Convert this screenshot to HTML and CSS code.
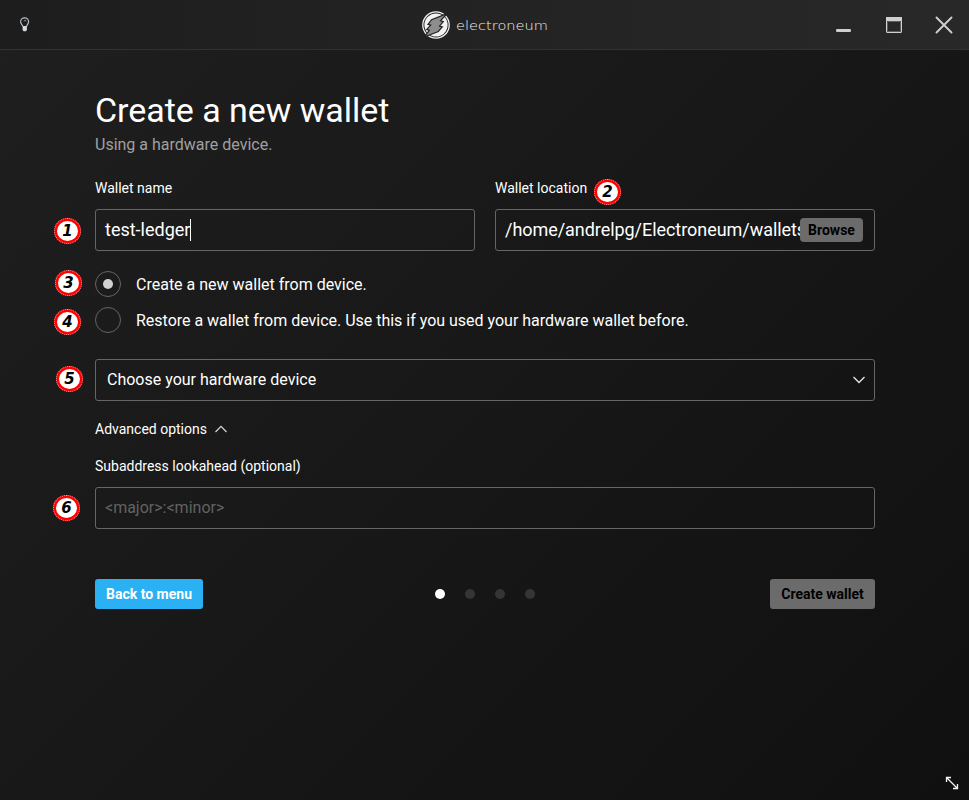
FILE: index.html
```html
<!DOCTYPE html>
<html lang="en">
<head>
<meta charset="utf-8">
<title>Electroneum</title>
<link rel="stylesheet" href="styles.css">
</head>
<body>
<header class="titlebar">
  <svg class="bulb" width="12" height="16" viewBox="0 0 12 16"><path d="M3.800 9.500C3.400 7.500 1.600 7 1.600 4.800a4 3.900 0 0 1 8 0C9.600 7 7.800 7.500 7.600 9.500" fill="none" stroke="#b9bdc0" stroke-width="1.200"/><path d="M4.800 4.200q1-1.400 2.600-.2" fill="none" stroke="#999"/><path d="M3.600 9h4.300v4l-1 1.200H4.600l-1-1.200z" fill="#d5dade"/></svg>
  <div class="brand">
    <svg width="30" height="30" viewBox="0 0 30 30"><circle cx="15" cy="15" r="13.200" fill="#222" stroke="#f2f2f2" stroke-width="1.300"/><circle cx="15" cy="15" r="11.600" fill="#f2f2f2"/><path d="M26 3.600 10.500 9.700 7 14.300l2.700.8-4 4.300 2.700 1L3.500 27l13.800-5.500 4-4.700-2.800-.7 3.800-4.500-2.800-.8z" fill="#8e8e8e" stroke="#222" stroke-width="1.200"/></svg>
    <svg class="wordmark" width="96" height="20" viewBox="0 0 96 20"><text x="1" y="15" textLength="92" lengthAdjust="spacingAndGlyphs">electroneum</text></svg>
  </div>
  <div class="controls">
    <svg width="50" height="50" viewBox="0 0 50 50"><rect x="17" y="29" width="15" height="3" rx="1.200" fill="#cfcfcf"/></svg>
    <svg width="50" height="50" viewBox="0 0 50 50"><rect x="17.500" y="17.500" width="15" height="15" rx=".5" fill="none" stroke="#cfcfcf"/><path d="M17 17h16v4H17z" fill="#cfcfcf"/><path d="M18.500 21.500h13v10h-13z" fill="none" stroke="#5d5d5d"/></svg>
    <svg width="50" height="50" viewBox="0 0 50 50"><path d="m17.500 17.500 15 15m0-15-15 15" fill="none" stroke="#cfcfcf" stroke-width="1.900" stroke-linecap="round"/></svg>
  </div>
</header>

<main class="wizard">
  <h1>Create a new wallet</h1>
  <p class="subtitle">Using a hardware device.</p>
  <div class="fields">
    <div class="field">
      <div class="label">Wallet name</div>
      <div class="input"><span>test-ledger</span><i class="caret"></i></div>
    </div>
    <div class="field">
      <div class="label">Wallet location</div>
      <div class="input location"><span class="path">/home/andrelpg/Electroneum/wallets</span><button class="browse">Browse</button></div>
    </div>
  </div>
  <div class="radios">
    <div class="radio"><span class="ring on"></span><span>Create a new wallet from device.</span></div>
    <div class="radio"><span class="ring"></span><span class="long">Restore a wallet from device. Use this if you used your hardware wallet before.</span></div>
  </div>
  <div class="input select"><span>Choose your hardware device</span><svg width="12" height="8" viewBox="0 0 12 8"><path d="m.5 1 5.500 5.500L11.500 1" fill="none" stroke="#e8e8e8" stroke-width="1.300"/></svg></div>
  <div class="advanced"><span>Advanced options</span><svg width="12" height="8" viewBox="0 0 12 8"><path d="M.5 7 6 1.300 11.500 7" fill="none" stroke="#d8d8d8" stroke-width="1.200"/></svg></div>
  <div class="label lookahead">Subaddress lookahead (optional)</div>
  <div class="input placeholder"><span>&lt;major&gt;:&lt;minor&gt;</span></div>
  <nav class="actions">
    <button class="btn primary">Back to menu</button>
    <div class="dots"><i class="active"></i><i></i><i></i><i></i></div>
    <button class="btn disabled">Create wallet</button>
  </nav>
</main>

<span class="badge b1">1</span>
<span class="badge b2">2</span>
<span class="badge b3">3</span>
<span class="badge b4">4</span>
<span class="badge b5">5</span>
<span class="badge b6">6</span>
<svg class="resize" width="14" height="14" viewBox="0 0 14 14"><path d="M1.500 6V1.500H6M2 2l10 10M8 12.500h4.500V8" fill="none" stroke="#f4f4f4" stroke-width="1.300"/></svg>
</body>
</html>
```
FILE: styles.css
```css
* { box-sizing: border-box; }
body {
  margin: 0;
  width: 969px;
  height: 800px;
  position: relative;
  overflow: hidden;
  background: linear-gradient(135deg, #1f1f1f, #101010);
  color: #fff;
  font-family: Roboto, sans-serif;
}
svg { display: block; flex: none; }
button { font-family: inherit; border: 0; padding: 0; }
.titlebar {
  height: 50px;
  display: grid;
  grid-template-columns: 1fr auto 1fr;
  align-items: center;
  background: linear-gradient(90deg, #1d1d1d, #232323 50%, #282828);
  border-bottom: 1px solid #323232;
}
.bulb { margin-left: 19px; }
.brand { display: flex; align-items: center; gap: 4px; margin-right: -2px; }
.wordmark { overflow: visible; }
.wordmark text {
  font-family: "DejaVu Sans", sans-serif;
  font-size: 13px;
  font-weight: 200;
  fill: #f2f2f2;
}
.controls { display: flex; justify-content: flex-end; }

.wizard { width: 780px; margin-left: 95px; padding-top: 40px; }
h1 { margin: 0; font-size: 34px; font-weight: 400; line-height: 40px; letter-spacing: -.03px; }
.subtitle { margin: 5px 0 0; font-size: 16px; line-height: 20px; color: #a0a0a0; }
.fields { display: grid; grid-template-columns: 1fr 1fr; gap: 20px; margin-top: 23px; }
.label { font-size: 14px; line-height: 20px; }
.field .input { margin-top: 11px; }
.input {
  height: 42px;
  display: flex;
  align-items: center;
  border: 1px solid #666;
  border-radius: 3px;
  padding: 0 9px;
  font-size: 18px;
}
.input span { padding-bottom: 2px; }
.caret { width: 1px; height: 22px; background: #fff; }
.location { justify-content: space-between; padding-right: 11px; }
.path { width: 310px; margin-right: -15px; white-space: nowrap; letter-spacing: -.05px; }
.browse {
  position: relative;
  flex: none;
  width: 63px;
  height: 24px;
  border-radius: 4px;
  background: #6b6b6b;
  color: #000;
  font-size: 14px;
  font-weight: 700;
}
.radios { display: grid; gap: 10px; margin-top: 20px; }
.radio { display: flex; align-items: center; gap: 15px; height: 26px; font-size: 16px; }
.long { letter-spacing: -.01px; }
.ring { width: 26px; height: 26px; display: grid; place-items: center; border: 1px solid #666; border-radius: 50%; }
.ring.on::after { content: ""; width: 10px; height: 10px; border-radius: 50%; background: #d2d2d2; }
.select { margin-top: 26px; padding-left: 11px; justify-content: space-between; font-size: 16px; }
.advanced { display: flex; align-items: center; gap: 8px; margin-top: 18px; font-size: 14px; line-height: 20px; }
.lookahead { margin-top: 17px; }
.placeholder { margin-top: 11px; font-size: 16px; color: #626262; }
.actions { display: grid; grid-template-columns: 1fr auto 1fr; align-items: center; margin-top: 50px; }
.btn { height: 30px; border-radius: 3px; font-size: 14px; font-weight: 700; }
.primary { width: 108px; background: #2bb0f4; color: #fff; }
.disabled { width: 105px; justify-self: end; background: #6b6b6b; color: #000; }
.dots { display: flex; gap: 20px; }
.dots i { width: 10px; height: 10px; border-radius: 50%; background: #353535; }
.dots .active { background: #fff; }

.badge {
  position: absolute;
  width: 27px;
  height: 26px;
  border: 3px solid #f00;
  border-radius: 50%;
  background: #fff;
  outline: 1px dotted rgba(255, 255, 255, .6);
  outline-offset: -1px;
  color: #000;
  font: italic 700 15px/21px "DejaVu Sans", sans-serif;
  text-align: center;
}
.b1 { left: 54px; top: 218px; }
.b2 { left: 594px; top: 179px; }
.b3 { left: 55px; top: 270px; }
.b4 { left: 54px; top: 309px; }
.b5 { left: 56px; top: 366px; }
.b6 { left: 53px; top: 495px; }
.resize { position: absolute; left: 945px; top: 776px; }
```
